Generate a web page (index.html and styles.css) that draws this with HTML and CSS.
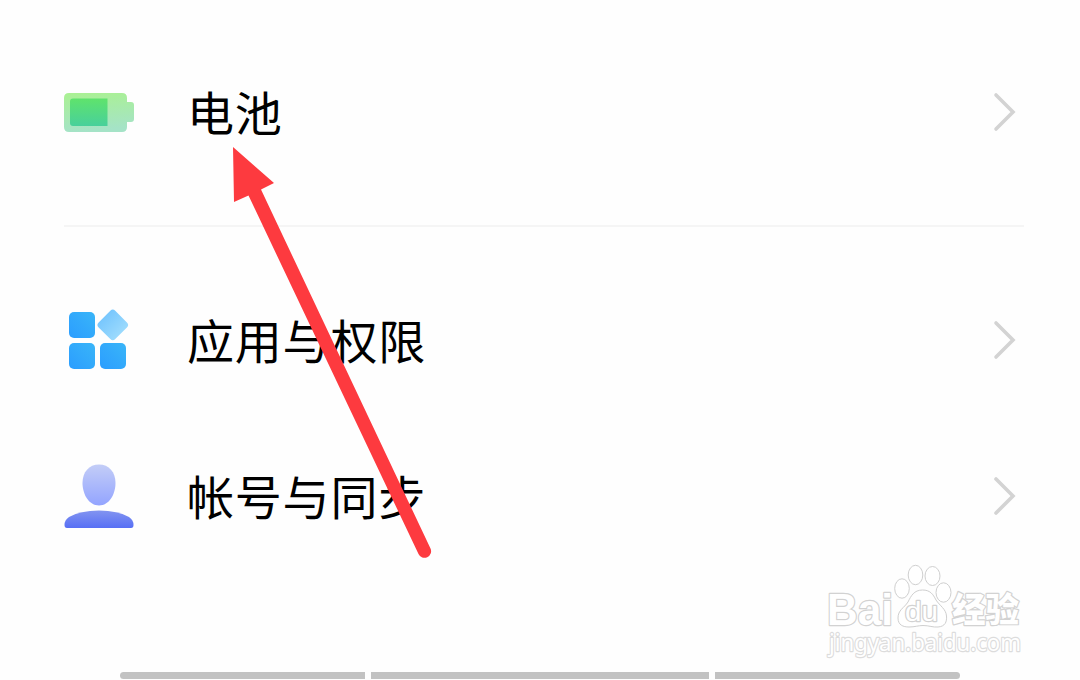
FILE: index.html
```html
<!DOCTYPE html>
<html lang="zh-CN">
<head>
  <meta charset="UTF-8">
  <title>设置</title>
  <link rel="stylesheet" href="styles.css">
</head>
<body>
  <div class="screen">
    <div class="list">
      <div class="row">
        <svg class="icon" viewBox="0 0 72 72">
          <defs>
            <linearGradient id="shell" x1="0" y1="0" x2="0.15" y2="1">
              <stop offset="0" stop-color="#aaf192"/>
              <stop offset="1" stop-color="#a5e3c7"/>
            </linearGradient>
            <linearGradient id="charge" x1="0" y1="0" x2="0" y2="1">
              <stop offset="0" stop-color="#5fe36c"/>
              <stop offset="1" stop-color="#48d09b"/>
            </linearGradient>
          </defs>
          <path d="M5 17H58Q63 17 63 22V26H67Q70 26 70 29V43Q70 46 67 46H63V51Q63 56 58 56H5Q0 56 0 51V22Q0 17 5 17Z" fill="url(#shell)"/>
          <path d="M9 22.500H43.500V50H9Q6 50 6 47V25.500Q6 22.500 9 22.500Z" fill="url(#charge)"/>
        </svg>
        <span class="label">电池</span>
        <svg class="arrow" viewBox="0 0 24 40"><path d="M3 3L20 20L3 37"/></svg>
      </div>
    </div>

    <div class="list">
      <div class="row">
        <svg class="icon" viewBox="0 0 72 72">
          <defs>
            <linearGradient id="tile" x1="0" y1="1" x2="1" y2="0">
              <stop offset="0" stop-color="#2b9dff"/>
              <stop offset="1" stop-color="#39b5f8"/>
            </linearGradient>
            <linearGradient id="diamond" x1="0" y1="0" x2="1" y2="0">
              <stop offset="0" stop-color="#78c7fd"/>
              <stop offset="1" stop-color="#9bdafd"/>
            </linearGradient>
          </defs>
          <rect x="5" y="8" width="26" height="26" rx="5" fill="url(#tile)"/>
          <rect x="5" y="39" width="26" height="26" rx="5" fill="url(#tile)"/>
          <rect x="36" y="39" width="26" height="26" rx="5" fill="url(#tile)"/>
          <rect x="37" y="9.200" width="23.500" height="23.500" rx="3.500" transform="rotate(45 48.750 21)" fill="url(#diamond)"/>
        </svg>
        <span class="label">应用与权限</span>
        <svg class="arrow" viewBox="0 0 24 40"><path d="M3 3L20 20L3 37"/></svg>
      </div>
      <div class="row">
        <svg class="icon" viewBox="0 0 72 72">
          <defs>
            <linearGradient id="head" x1="0" y1="0" x2="0" y2="1">
              <stop offset="0" stop-color="#c3cdf7"/>
              <stop offset="1" stop-color="#93a4ff"/>
            </linearGradient>
            <linearGradient id="body" x1="0" y1="0" x2="0" y2="1">
              <stop offset="0" stop-color="#8294f0"/>
              <stop offset="1" stop-color="#576ff5"/>
            </linearGradient>
          </defs>
          <path d="M35 4.500C45 4.500 51.500 12 51.500 23C51.500 34.500 45 45.500 35 45.500S18.500 34.500 18.500 23C18.500 12 25 4.500 35 4.500Z" fill="url(#head)"/>
          <path d="M0.500 65Q0.500 60 5 57Q16 50.500 35 50.500T65 57Q69.500 60 69.500 65Q69.500 68 67 68H3Q0.500 68 0.500 65Z" fill="url(#body)"/>
        </svg>
        <span class="label">帐号与同步</span>
        <svg class="arrow" viewBox="0 0 24 40"><path d="M3 3L20 20L3 37"/></svg>
      </div>
    </div>

    <div class="navbar">
      <span></span>
      <span></span>
      <span></span>
    </div>

    <!-- red pointer over the list -->
    <svg class="pointer" viewBox="0 0 210 420">
      <path d="M13 7L54 43L41 49.500L210.500 408.500A6.600 6.600 0 0 1 198.500 414L28.500 55.500L14 62Z" fill="#fd3a3f"/>
    </svg>

    <svg class="watermark" viewBox="0 0 200 100">
      <text class="wm-logo" x="-1" y="64.500" textLength="66" lengthAdjust="spacingAndGlyphs">Bai</text>
      <g class="wm-paw">
        <ellipse cx="74" cy="28.500" rx="7.300" ry="9.700"/>
        <ellipse cx="87.500" cy="15" rx="7.300" ry="9.700"/>
        <ellipse cx="104.500" cy="16" rx="7.500" ry="9.500"/>
        <ellipse cx="115.500" cy="32.500" rx="7.500" ry="9.700"/>
        <path d="M94.500 30C86 30 83 36 80 42C76 48 70 50 70 58C70 65 75 67 81 67C87 67 90 65.500 95 65.500C101 65.500 105 67.500 110 67C117 66.500 119 62 118.500 56C118 49 112 46 108 40C105 34 102 30 94.500 30Z"/>
      </g>
      <text class="wm-du" x="77" y="60.500" textLength="33" lengthAdjust="spacingAndGlyphs">du</text>
      <text class="wm-cn" x="124" y="62" textLength="67" lengthAdjust="spacingAndGlyphs">经验</text>
      <text class="wm-url" x="1" y="91" textLength="192" lengthAdjust="spacingAndGlyphs">jingyan.baidu.com</text>
    </svg>
  </div>
</body>
</html>
```
FILE: styles.css
```css
body {
  margin: 0;
  background-color: #fefefe;
  font-family: "Noto Sans CJK SC", sans-serif;
}

.screen {
  position: relative;
  display: flex;
  flex-direction: column;
  box-sizing: border-box;
  width: 1080px;
  height: 680px;
  padding-top: 34px;
  overflow: hidden;
}

.list {
  margin: 0 56px 0 64px;
}

.list + .list {
  margin-top: 35px;
  border-top: 2px solid #f5f5f5;
  padding-top: 35px;
}

.row {
  display: flex;
  align-items: center;
  height: 156px;
}

.icon {
  flex: none;
  width: 72px;
  height: 72px;
}

.label {
  flex: 1;
  margin-left: 51px;
  padding-bottom: 3px;
  color: #000;
  font-size: 47px;
  line-height: 60px;
  letter-spacing: 0.8px;
}

.arrow {
  width: 24px;
  height: 40px;
  margin-right: 7px;
  fill: none;
  stroke: #d3d3d3;
  stroke-width: 3.6;
  stroke-linecap: round;
}

.navbar {
  display: grid;
  grid-template-columns: 245px 338px 245px;
  gap: 6px;
  margin: auto 0 0 120px;
}

.navbar span {
  height: 7px;
  margin-bottom: 1px;
  background-color: #c2c2c2;
}

.navbar span:first-child {
  border-radius: 4px 0 0 4px;
}

.navbar span:last-child {
  border-radius: 0 4px 4px 0;
}

.pointer {
  position: absolute;
  left: 220px;
  top: 140px;
  width: 210px;
  height: 420px;
  overflow: visible;
}

.watermark {
  position: absolute;
  left: 828px;
  top: 560px;
  width: 200px;
  height: 100px;
  overflow: visible;
  fill: #fff;
  stroke: #d2d2d2;
  stroke-width: 1;
}

/* outline sits behind the white glyphs */
.watermark text {
  paint-order: stroke;
  stroke-width: 2.4;
  stroke-linejoin: round;
}

.wm-logo {
  font: bold 45px "Liberation Sans", sans-serif;
}

.wm-paw {
  stroke: #cfcfcf;
}

.wm-du {
  font: 28px "Liberation Sans", sans-serif;
}

.wm-cn {
  font: 900 34px "Noto Sans CJK SC", sans-serif;
}

.wm-url {
  font: 24px "Noto Sans", sans-serif;
  stroke: #dcdcdc;
}
```
